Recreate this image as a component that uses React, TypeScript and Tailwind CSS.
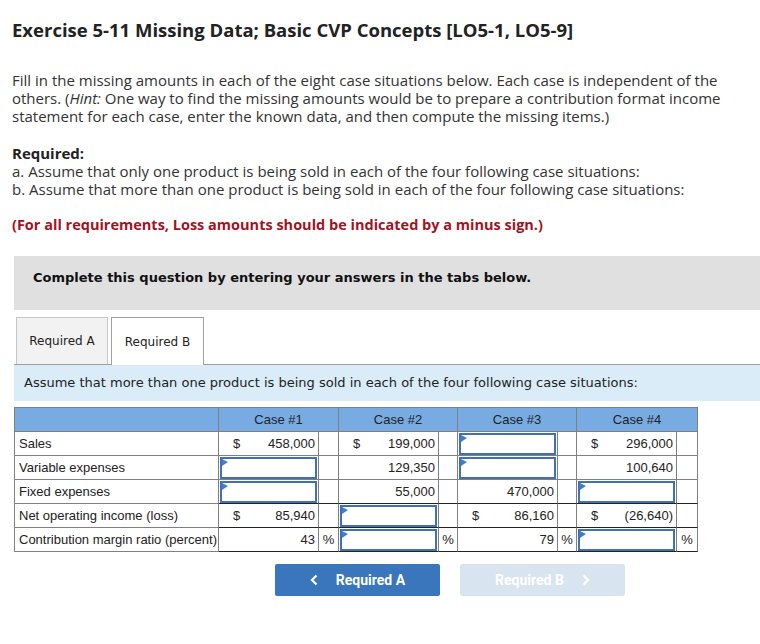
import React from "react";

const BLUE_BORDER = "border-[#4170b5]";

function InputBox() {
  return (
    <div className={`relative h-[22px] w-full border-2 ${BLUE_BORDER} bg-white`}>
      <svg className="absolute left-0 top-0" width="6" height="7" viewBox="0 0 6 7">
        <polygon points="0,0 6,3 0,7" fill="#3f7fd1" />
      </svg>
    </div>
  );
}

type Cell =
  | { kind: "val"; dollar?: boolean; text: string; pct?: boolean }
  | { kind: "input"; pct?: boolean }
  | { kind: "empty" };

const rows: { label: string; cells: Cell[]; dark: boolean }[] = [
  {
    label: "Sales",
    dark: false,
    cells: [
      { kind: "val", dollar: true, text: "458,000" },
      { kind: "val", dollar: true, text: "199,000" },
      { kind: "input" },
      { kind: "val", dollar: true, text: "296,000" },
    ],
  },
  {
    label: "Variable expenses",
    dark: false,
    cells: [
      { kind: "input" },
      { kind: "val", text: "129,350" },
      { kind: "input" },
      { kind: "val", text: "100,640" },
    ],
  },
  {
    label: "Fixed expenses",
    dark: true,
    cells: [
      { kind: "input" },
      { kind: "val", text: "55,000" },
      { kind: "val", text: "470,000" },
      { kind: "input" },
    ],
  },
  {
    label: "Net operating income (loss)",
    dark: true,
    cells: [
      { kind: "val", dollar: true, text: "85,940" },
      { kind: "input" },
      { kind: "val", dollar: true, text: "86,160" },
      { kind: "val", dollar: true, text: "(26,640)" },
    ],
  },
  {
    label: "Contribution margin ratio (percent)",
    dark: true,
    cells: [
      { kind: "val", text: "43", pct: true },
      { kind: "input", pct: true },
      { kind: "val", text: "79", pct: true },
      { kind: "input", pct: true },
    ],
  },
];

const pctWidths = ["w-[20px]", "w-[19px]", "w-[19px]", "w-[21px]"];

export default function App() {
  return (
    <div className="min-h-[644px] w-[760px] bg-white pb-6">
      <div className="pl-[12px] pr-3" style={{ fontFamily: '"Open Sans", "Liberation Sans", sans-serif' }}>
        <h1 className="pt-[19px] text-[18.5px] font-bold leading-[22px] text-[#222]">
          Exercise 5-11 Missing Data; Basic CVP Concepts [LO5-1, LO5-9]
        </h1>
        <p className="mt-[30px] text-[15px] leading-[18px] text-[#333]">
          Fill in the missing amounts in each of the eight case situations below. Each case is independent of the
          others. (<i>Hint:</i> One way to find the missing amounts would be to prepare a contribution format income
          statement for each case, enter the known data, and then compute the missing items.)
        </p>
        <p className="mt-[19px] text-[15px] font-bold leading-[18px] text-[#222]">Required:</p>
        <p className="text-[15px] leading-[18px] text-[#333]">
          a. Assume that only one product is being sold in each of the four following case situations:
        </p>
        <p className="text-[15px] leading-[18px] text-[#333]">
          b. Assume that more than one product is being sold in each of the four following case situations:
        </p>
        <p className="mt-[18px] text-[14.5px] font-bold leading-[18px] text-[#a3131f]">
          (For all requirements, Loss amounts should be indicated by a minus sign.)
        </p>
      </div>

      <div className="ml-[14px]" style={{ fontFamily: '"DejaVu Sans", Verdana, sans-serif' }}>
        <div className="mt-[22px] h-[54px] bg-[#e0e0e0] pl-[19px] pt-[14px] text-[13px] font-bold leading-[16px] text-[#111]">
          Complete this question by entering your answers in the tabs below.
        </div>

        <div className="mt-[7px] flex items-end border-b border-[#a0a0a0]">
          <div className="ml-[2px] flex h-[47px] w-[92px] items-center justify-center border border-b-0 border-[#c8c8c8] bg-[#f2f2f2] text-[12px] text-[#222]">
            Required A
          </div>
          <div className="relative -mb-px ml-[3px] flex h-[48px] w-[93px] items-center justify-center border border-b-0 border-[#a0a0a0] bg-white text-[12px] text-[#222]">
            Required B
          </div>
        </div>

        <div className="flex h-[36px] items-center bg-[#daecf8] pl-[10px] text-[13px] text-[#222]">
          Assume that more than one product is being sold in each of the four following case situations:
        </div>

        <table
          className="mt-[6px] border-separate text-[13px] text-[#222]"
          style={{ borderSpacing: 0, fontFamily: '"Liberation Sans", Arial, sans-serif' }}
        >
          <thead>
            <tr className="h-[25px] bg-[#78abe2]">
              <th className="w-[205px] border border-[#808080] p-0"></th>
              {["Case #1", "Case #2", "Case #3", "Case #4"].map((c) => (
                <th
                  key={c}
                  colSpan={2}
                  className="border-y border-r border-[#808080] p-0 text-center text-[13px] font-normal"
                >
                  {c}
                </th>
              ))}
            </tr>
          </thead>
          <tbody>
            {rows.map((r) => (
              <tr key={r.label} className="h-[24px]">
                <td className="border-x border-b border-[#808080] pl-[4px] leading-none">{r.label}</td>
                {r.cells.map((c, i) => {
                  const bb = r.dark ? "border-b-[#222]" : "border-b-[#808080]";
                  const hasPct = c.kind !== "empty" && c.pct;
                  return (
                    <React.Fragment key={i}>
                      <td className={`w-[100px] border-r border-b border-r-[#808080] ${bb} p-0`}>
                        {c.kind === "input" ? (
                          <div className="px-px">
                            <InputBox />
                          </div>
                        ) : c.kind === "val" ? (
                          <div className="flex items-center justify-between pl-[14px] pr-[3px]">
                            <span>{c.dollar ? "$" : ""}</span>
                            <span>{c.text}</span>
                          </div>
                        ) : null}
                      </td>
                      <td
                        className={`${pctWidths[i]} border-r border-b border-r-[#808080] ${bb} p-0 text-center`}
                      >
                        {hasPct ? "%" : ""}
                      </td>
                    </React.Fragment>
                  );
                })}
              </tr>
            ))}
          </tbody>
        </table>
      </div>

      <div className="ml-[275px] mt-[12px] flex gap-[20px]" style={{ fontFamily: 'Roboto, "Liberation Sans", sans-serif' }}>
        <button className="flex h-[32px] w-[165px] items-center justify-center gap-[18px] rounded-[2px] bg-[#3a76bb] text-[14px] font-bold text-white">
          <svg width="8" height="12" viewBox="0 0 8 12">
            <path d="M6.5 1.5 L2 6 L6.5 10.5" fill="none" stroke="white" strokeWidth="2.2" />
          </svg>
          <span>Required A</span>
        </button>
        <button className="flex h-[32px] w-[165px] items-center justify-center gap-[18px] rounded-[2px] bg-[#d9e4f1] text-[14px] font-bold text-white">
          <span>Required B</span>
          <svg width="8" height="12" viewBox="0 0 8 12">
            <path d="M1.5 1.5 L6 6 L1.5 10.5" fill="none" stroke="white" strokeWidth="2.2" />
          </svg>
        </button>
      </div>
    </div>
  );
}
